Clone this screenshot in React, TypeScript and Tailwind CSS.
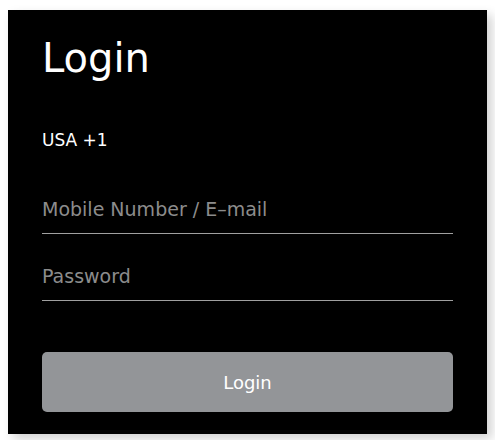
import React from "react";

export default function App() {
  return (
    <div className="w-[495px] h-[440px] bg-white overflow-hidden pt-[10px] pl-[8px]">
      <div
        className="w-[479px] h-[424px] bg-black shadow-[5px_5px_10px_rgba(0,0,0,0.18)] pt-[28px] pl-[34px] pr-[34px] flex flex-col"
        style={{ fontFamily: '"DejaVu Sans", "Liberation Sans", sans-serif' }}
      >
        <h1 className="text-[40px] leading-[40px] text-white font-normal">Login</h1>
        <div className="mt-[52px] text-[17px] leading-[20px] text-white">USA +1</div>
        <div className="mt-[47px] pb-[12px] border-b border-[#a0a0a0] w-[411px]">
          <input
            className="block w-full h-[24px] text-[19px] leading-[24px] bg-transparent outline-none text-white placeholder:text-[#8c8c8c]"
            placeholder="Mobile Number / E–mail"
          />
        </div>
        <div className="mt-[30px] pb-[12px] border-b border-[#a0a0a0] w-[411px]">
          <input
            type="password"
            className="block w-full h-[24px] text-[19px] leading-[24px] bg-transparent outline-none text-white placeholder:text-[#8c8c8c]"
            placeholder="Password"
          />
        </div>
        <button className="mt-[51px] w-[411px] h-[60px] rounded-[5px] bg-[#939598] text-white text-[18px] leading-[27px] flex items-center justify-center">
          Login
        </button>
      </div>
    </div>
  );
}
